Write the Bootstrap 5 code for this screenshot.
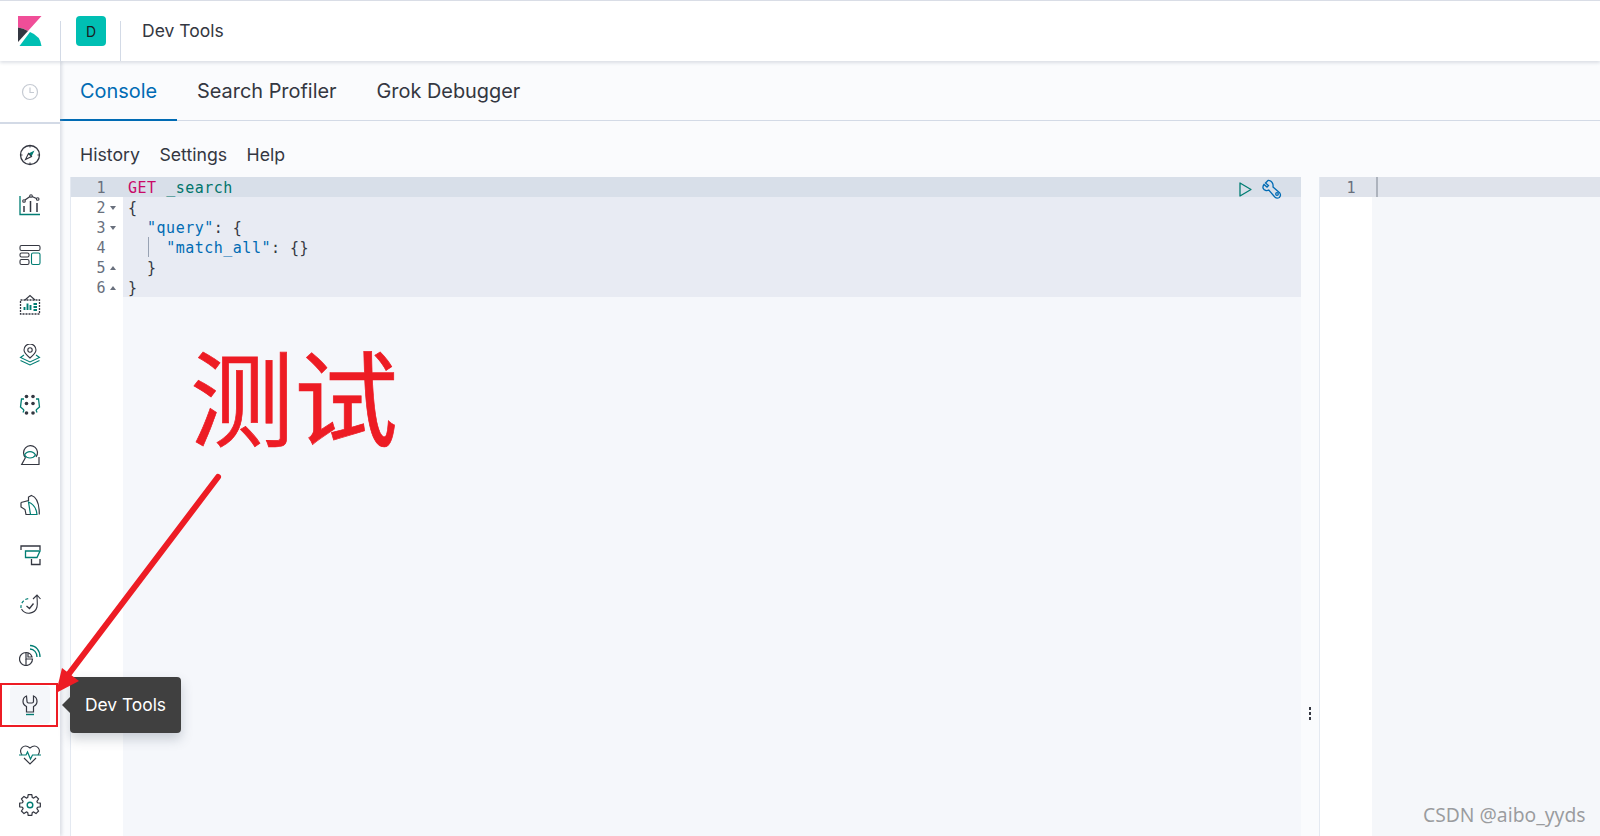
<!DOCTYPE html>
<html lang="en"><head><meta charset="utf-8"><title>Dev Tools</title>
<link href="https://cdn.jsdelivr.net/npm/bootstrap@5.3.0/dist/css/bootstrap.min.css" rel="stylesheet">
<style>
html,body{height:836px;overflow:hidden}
body{font-family:Inter,"Liberation Sans",sans-serif;color:#343741;background:#fafbfd}
.shell{height:836px;position:relative;overflow:hidden;border-top:1px solid #d9dde6}
.topbar{height:60px;background:#fff;box-shadow:0 2px 3px rgba(152,162,179,.3);position:relative;z-index:2}
.logo-cell{width:60px}
.bar-cell{width:60px;height:40px;border-left:1px solid #d3dae6;margin-top:20px}
.space-badge{width:30px;height:30px;background:#00bfb3;border-radius:4px;font-size:14px;color:#1a1c21;margin:-5px 0 0 15px}
.page-title{font-size:17.5px;padding-left:21px;border-left:1px solid #d3dae6;height:40px;margin-top:20px;line-height:20px}
.body-row{height:775px}
.side{width:60px;background:#fff;box-shadow:2px 0 3px rgba(152,162,179,.3);position:relative;z-index:1;flex:none}
.clock-cell{height:63px;border-bottom:2px solid #d3dae6}
.side-list{padding-top:6px}
.side-item{height:50px}
.side-item svg{width:22px;height:22px;fill:none;stroke:#343741;stroke-width:1.1}
.side-item .tl{stroke:#017d73}
.side-item .sd{fill:#343741;stroke:none}
.side-item .tf{fill:#017d73;stroke:none}
.side-on{width:40px;height:38px;background:#f5f7fa;border-radius:4px}
.main-col{min-width:0}
.tabs-row{height:60px;border-bottom:1px solid #d3dae6}
.tab-one{font-size:19.9px;padding:0 20px;height:60px;line-height:61px;color:#343741}
.tab-on{color:#006bb4;border-bottom:2px solid #006bb4}
.menu-row{height:56px;padding:25px 0 0 20px;font-size:17.7px;line-height:17px;gap:19.5px}
.editor-row{height:660px;padding-left:10px}
.code-pane{width:1231px;position:relative;border-left:1px solid #e4e9f1;background:#f5f7fb}
.gut{width:52px;background:#fff;flex:none}
.cm,.gut{font:15px/22px "DejaVu Sans Mono","Liberation Mono",monospace;letter-spacing:.5px}
.gut-line{height:20px;color:#69707d;text-align:right;padding-right:17px;position:relative}
.gut-act{background:#d8dfe9}
.fold{position:absolute;left:39px;top:9px;width:0;height:0;border:3px solid transparent}
.fold-d{border-top:4px solid #69707d;border-bottom:0}
.fold-u{border-bottom:4px solid #69707d;border-top:0}
.cm{flex:1;min-width:0;color:#343741}
.cm-line{height:20px;background:#e8ebf3;padding-left:5px;white-space:pre;position:relative}
.cm-act{background:#d8dfe9}
.kw{color:#c80a68}.url{color:#00756c}.str{color:#006bb4}
.guide{position:absolute;left:25px;top:0;width:1px;height:20px;background:#98a2b3}
.run-tools{position:absolute;right:18px;top:2px;gap:8px;line-height:0}
.grip{width:19px;background:#fafbfd;border-right:1px solid #e4e9f1;flex:none;position:relative}
.grip i{position:absolute;left:8px;width:2px;height:3px;background:#343741}
.out-pane{background:#f5f7fa;min-width:0}
.out-gut{width:52px;background:#fff;flex:none;height:100%}
.out-num{height:20px;background:#dfe3eb;text-align:center;padding-left:10px;color:#69707d;font:15px/22px "DejaVu Sans Mono",monospace}
.out-act{height:20px;background:#dfe3eb;flex:1}
.out-act i{display:block;width:2px;height:20px;background:#adb3bd;margin-left:4px}
.tip{position:absolute;left:70px;top:676px;width:111px;height:56px;background:#404040;color:#fff;border-radius:4px;font-size:17.4px;line-height:56px;text-align:center;box-shadow:0 6px 12px rgba(65,78,101,.25);z-index:5}
.tip::before{content:"";position:absolute;left:-8px;top:20px;border:8px solid transparent;border-left:0;border-right-color:#404040}
.red-box{position:absolute;left:0;top:682px;width:58px;height:44px;border:2px solid #ed1c24;z-index:6}
.big-note{position:absolute;left:190px;top:333px;font:104px/120px "Noto Sans CJK SC",sans-serif;color:#ed1c24;-webkit-text-stroke:.7px #ed1c24;z-index:6;white-space:nowrap}
.arrow-note{position:absolute;left:0;top:0;width:1600px;height:836px;z-index:6;pointer-events:none}
.mark-text{position:absolute;left:1423px;top:801px;font:19.3px/26px "Noto Sans","Open Sans",sans-serif;color:#9a9c9f;text-shadow:0 0 1px #fff;z-index:6;white-space:nowrap}
</style></head>
<body>
<div class="shell">
  <div class="topbar d-flex">
    <div class="logo-cell d-flex align-items-center justify-content-center">
      <svg width="26" height="32" viewBox="17.5 14 26 32"><path fill="#f04e98" d="M18.5 15H42L28.5 30Q24 27 18.5 26.5Z"/><path fill="#343741" d="M18.5 26.5Q24 27 28.5 30L18.5 41Z"/><path fill="#00bfb3" d="M20 45 30.5 31Q41 35 42 45Z"/></svg>
    </div>
    <div class="bar-cell"><div class="space-badge d-flex align-items-center justify-content-center">D</div></div>
    <div class="page-title"><span>Dev Tools</span></div>
  </div>
  <div class="body-row d-flex">
    <div class="side">
      <div class="clock-cell d-flex align-items-center justify-content-center">
        <svg width="18" height="18" viewBox="0 0 18 18" fill="none" stroke="#c6cbd3" stroke-width="1.2"><circle cx="9" cy="9" r="7.5"/><path d="M9 4.5V9.5H13"/></svg>
      </div>
      <div class="side-list">
      <div class="side-item d-flex align-items-center justify-content-center"><svg viewBox="0 0 22 22"><circle cx="11" cy="11" r="9.500" stroke-width="1.300"/><path d="M11 1.500v2M11 18.500v2M1.500 11h2M18.500 11h2"/><path class="tf" d="M15.500 6.500 12.500 12.500 9.500 9.500Z"/><path d="M6.500 15.500 9.500 9.500 12.500 12.500Z"/></svg></div>
      <div class="side-item d-flex align-items-center justify-content-center"><svg viewBox="0 0 22 22"><path class="tl" d="M1 2v18.500h20" stroke-width="1.300"/><path stroke-width="1.300" d="M6 6 11 2.500M13 2.500 17.500 4.500"/><circle cx="5" cy="7" r="1.300"/><circle cx="12" cy="2" r="1.300"/><circle cx="18.700" cy="5" r="1.300"/><path stroke-width="1.500" d="M5 18v-6M11.500 18V7M18 18v-9"/></svg></div>
      <div class="side-item d-flex align-items-center justify-content-center"><svg viewBox="0 0 22 22"><rect x="1" y="1.500" width="20" height="5" rx="1.500"/><rect x="1" y="9" width="9" height="4" rx="1.500"/><rect x="1" y="15.500" width="9" height="5" rx="1.500"/><rect class="tl" x="12.500" y="9" width="8.500" height="11.500" rx="1.500"/></svg></div>
      <div class="side-item d-flex align-items-center justify-content-center"><svg viewBox="0 0 22 22"><path stroke-dasharray="2 1" stroke-width="1.300" d="M1.500 6h19v14h-19z"/><path d="M6 6l5-4.500L16 6"/><path class="tl" stroke-width="1.900" d="M5.500 16v-3M8.500 16V9.500M11.500 16v-5M14.500 10h3.500M14.500 13h3.500M14.500 16h3.500"/></svg></div>
      <div class="side-item d-flex align-items-center justify-content-center"><svg viewBox="0 0 22 22"><path d="M11 14C7.500 11 5 8.500 5 6a6 6 0 0 1 12 0c0 2.500-2.500 5-6 8Z"/><circle cx="11" cy="6" r="2.200"/><path class="tl" d="M5 11 1.500 13.500 11 18l9.500-4.500L17 11M1.500 16.500 11 21l9.500-4.500"/></svg></div>
      <div class="side-item d-flex align-items-center justify-content-center"><svg viewBox="0 0 22 22"><circle class="sd" cx="7.500" cy="2.500" r="1.800"/><circle class="sd" cx="14" cy="2.500" r="1.800"/><circle class="sd" cx="7.500" cy="9.500" r="1.800"/><circle class="sd" cx="14" cy="9.500" r="1.800"/><circle class="sd" cx="7.500" cy="19" r="1.800"/><circle class="sd" cx="14" cy="19" r="1.800"/><path class="tl" stroke-width="1.300" d="M5 5H2.500L1.500 13l3.500 3M5 16l-1 2.500M17 5h2.500L20.500 13 17 16M17 16l1 2.500"/></svg></div>
      <div class="side-item d-flex align-items-center justify-content-center"><svg viewBox="0 0 22 22"><path stroke-width="1.200" d="M6.500 13.500A7 7 0 1 1 17 13M6.500 13.500 2.700 20.500H20V13"/><path class="tl" stroke-width="1.200" d="M5.500 11C8 6.500 14 6.500 16.500 11 14 15 8 15 5.500 11Z"/></svg></div>
      <div class="side-item d-flex align-items-center justify-content-center"><svg viewBox="0 0 22 22"><path stroke-width="1.200" d="M2 8.500 9.500 6.500V3L12.500 1.500C17.500 3 20.300 8 20.300 20.500M2 8.500v4.500l4 2.500 1 5h4.500"/><path class="tl" stroke-width="1.200" d="M9.500 8C14 10 17.500 14.500 18 20.500h-6.500Z"/></svg></div>
      <div class="side-item d-flex align-items-center justify-content-center"><svg viewBox="0 0 22 22"><path stroke-width="1.300" d="M2 6V2h19v4"/><path class="tl" stroke-width="1.300" d="M6.500 7H21l-3 6.500H6.500Z"/><path stroke-width="1.300" d="M12.500 15v5.500H21V15"/></svg></div>
      <div class="side-item d-flex align-items-center justify-content-center"><svg viewBox="0 0 22 22"><path class="tl" stroke-width="1.200" stroke-dasharray="3 2" d="M2 14A8.500 8.500 0 0 1 10 4.500"/><path d="M2.500 15A8.500 8.500 0 0 0 18 13c.8-3.500 0-7 0-11M14 5l4-4 3.500 4"/><path d="M7.500 12l3 2.500 4-5" stroke-width="1.300"/></svg></div>
      <div class="side-item d-flex align-items-center justify-content-center"><svg viewBox="0 0 22 22"><path stroke-width="1.200" d="M7 8.500a6.500 6.500 0 1 0 6.500 6.500H7Z"/><path stroke-width="1.200" d="M7 8.500a6.500 6.500 0 0 1 6 4.500H9V8.800M7 15v6.500"/><path class="tl" stroke-width="1.300" d="M11 5c4 0 7 3.500 7 8M11 1.500c6 0 10 5 10 11.500"/></svg></div>
      <div class="side-item d-flex align-items-center justify-content-center"><div class="side-on d-flex align-items-center justify-content-center"><svg viewBox="0 0 22 22"><path stroke-width="1.200" d="M7.500 2C5 3 4 5 4 7.500c0 2.500 1.500 4 3.500 5V18h7v-5.500c2-1 3.500-2.500 3.500-5 0-2.500-1-4.500-3.500-5.500v5.500c0 1-1 1.500-1.500 1.500h-3c-.5 0-2-.5-2-1.500Z"/><path class="tl" stroke-width="1.400" d="M7 20.500h8"/></svg></div></div>
      <div class="side-item d-flex align-items-center justify-content-center"><svg viewBox="0 0 22 22"><path d="M3 11C-1 5 5-1 11 4c6-5 12 1 8 7M5 14l6 6 6-6"/><path class="tl" stroke-width="1.200" d="M0 11h7l1.500-3 3 7 2-4h8.500"/></svg></div>
      <div class="side-item d-flex align-items-center justify-content-center"><svg viewBox="0 0 22 22"><polygon stroke-width="1.200" stroke-linejoin="round" points="18.46,8.72 21.34,9.18 21.34,12.82 18.46,13.28 17.89,14.66 19.6,17.02 17.02,19.6 14.66,17.89 13.28,18.46 12.82,21.34 9.18,21.34 8.72,18.46 7.34,17.89 4.98,19.6 2.4,17.02 4.11,14.66 3.54,13.28 .66,12.82 .66,9.18 3.54,8.72 4.11,7.34 2.4,4.98 4.98,2.4 7.34,4.11 8.72,3.54 9.18,.66 12.82,.66 13.28,3.54 14.66,4.11 17.02,2.4 19.6,4.98 17.89,7.34"/><circle class="tl" cx="11" cy="11" r="2.800" stroke-width="1.400"/></svg></div>
      </div>
    </div>
    <div class="main-col flex-grow-1">
      <div class="tabs-row d-flex">
        <div class="tab-one tab-on">Console</div>
        <div class="tab-one">Search Profiler</div>
        <div class="tab-one">Grok Debugger</div>
      </div>
      <div class="menu-row d-flex"><span>History</span><span>Settings</span><span>Help</span></div>
      <div class="editor-row d-flex">
        <div class="code-pane d-flex">
          <div class="gut">
            <div class="gut-line gut-act">1</div>
            <div class="gut-line">2<i class="fold fold-d"></i></div>
            <div class="gut-line">3<i class="fold fold-d"></i></div>
            <div class="gut-line">4</div>
            <div class="gut-line">5<i class="fold fold-u"></i></div>
            <div class="gut-line">6<i class="fold fold-u"></i></div>
          </div>
          <div class="cm">
            <div class="cm-line cm-act"><span class="kw">GET</span> <span class="url">_search</span></div>
            <div class="cm-line">{</div>
            <div class="cm-line">  <span class="str">"query"</span>: {</div>
            <div class="cm-line"><i class="guide"></i>    <span class="str">"match_all"</span>: {}</div>
            <div class="cm-line">  }</div>
            <div class="cm-line">}</div>
          </div>
          <div class="run-tools d-flex align-items-center">
            <svg width="16" height="17" viewBox="0 0 16 17" fill="none" stroke="#017d73" stroke-width="1.300"><path d="M3 2 14 8.500 3 15Z" stroke-linejoin="round"/></svg>
            <svg width="22" height="21" viewBox="0 0 22 21" fill="none" stroke="#006bb4" stroke-width="1.300"><path d="M7 1.500 4.500 4l3 2.500L6 8 3 5.500C1 8 2 11 5 11.500c1 .1 2 0 2.800-.5l6 7c1.500 1.500 3 1.500 4.500.5 1.500-1.500 1.500-3 .5-4.500L12 8c.6-3-1.500-7-5-6.500Z"/><circle cx="16" cy="15" r="1.300"/></svg>
          </div>
        </div>
        <div class="grip"><i style="top:530px"></i><i style="top:535px"></i><i style="top:540px"></i></div>
        <div class="out-pane flex-grow-1 d-flex align-items-start">
          <div class="out-gut"><div class="out-num">1</div></div>
          <div class="out-act"><i></i></div>
        </div>
      </div>
    </div>
  </div>
  <div class="tip">Dev Tools</div>
  <div class="red-box"></div>
  <div class="big-note">测试</div>
  <svg class="arrow-note" viewBox="0 0 1600 836"><path d="M218 476 68 674" stroke="#ed1c24" stroke-width="6" stroke-linecap="round" fill="none"/><path fill="#ed1c24" d="M56 692 62 667 79 680Z"/></svg>
  <div class="mark-text">CSDN @aibo_yyds</div>
</div>
<script src="https://cdn.jsdelivr.net/npm/bootstrap@5.3.0/dist/js/bootstrap.bundle.min.js"></script>
</body></html>
